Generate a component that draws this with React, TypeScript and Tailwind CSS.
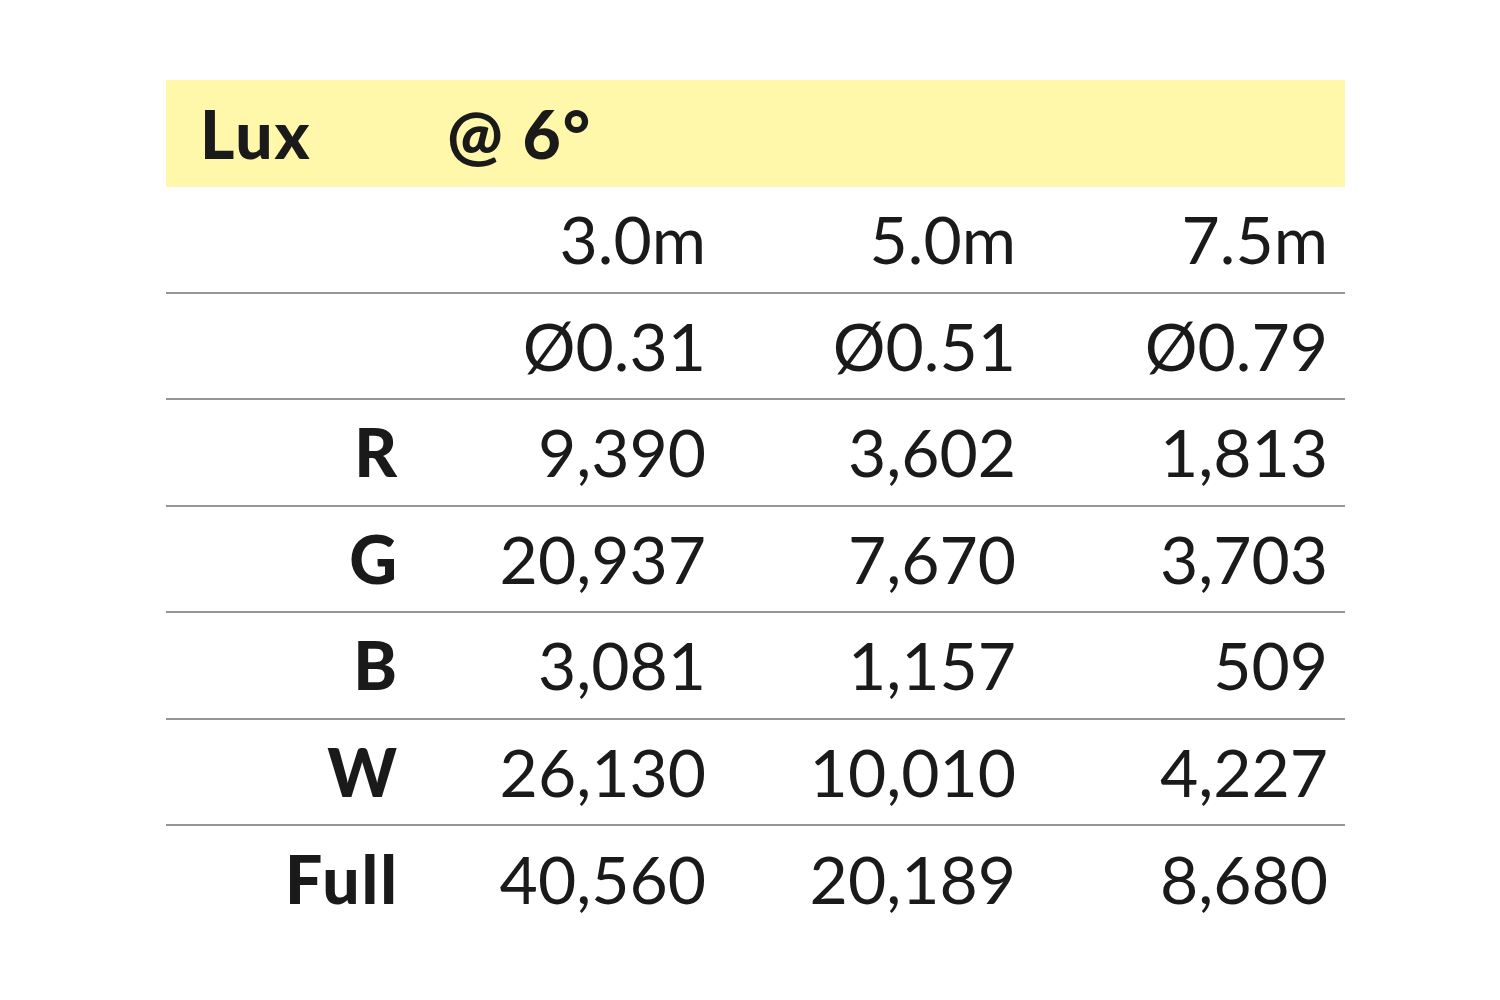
const cols = 'grid grid-cols-[247px_310px_310px_312px]';

const rows: { label: string; values: string[] }[] = [
  { label: '', values: ['3.0m', '5.0m', '7.5m'] },
  { label: '', values: ['Ø0.31', 'Ø0.51', 'Ø0.79'] },
  { label: 'R', values: ['9,390', '3,602', '1,813'] },
  { label: 'G', values: ['20,937', '7,670', '3,703'] },
  { label: 'B', values: ['3,081', '1,157', '509'] },
  { label: 'W', values: ['26,130', '10,010', '4,227'] },
  { label: 'Full', values: ['40,560', '20,189', '8,680'] },
];

function App() {
  return (
    <div className="min-h-screen bg-white text-[#1a1a1a] font-['Lato','Liberation_Sans',sans-serif]">
      <div className="pt-[80px] pl-[166px]">
        <div className="w-[1179px]">
          <div className={`${cols} h-[107px] items-center bg-[#fff7aa] text-[66px] font-black leading-none tracking-[0.03em]`}>
            <div className="pl-[34px]">Lux</div>
            <div className="pl-[34px]">@ 6°</div>
          </div>
          {rows.map((row, i) => (
            <div
              key={i}
              className={`${cols} h-[106.5px] items-center text-[66px] leading-none ${
                i < rows.length - 1 ? 'border-b-2 border-[#959595]' : ''
              }`}
            >
              <div className="pr-[14px] text-right font-black tracking-[0.03em]">{row.label}</div>
              {row.values.map((v, j) => (
                <div key={j} className="pr-[17px] text-right font-normal">
                  {v}
                </div>
              ))}
            </div>
          ))}
        </div>
      </div>
    </div>
  );
}

export default App;
